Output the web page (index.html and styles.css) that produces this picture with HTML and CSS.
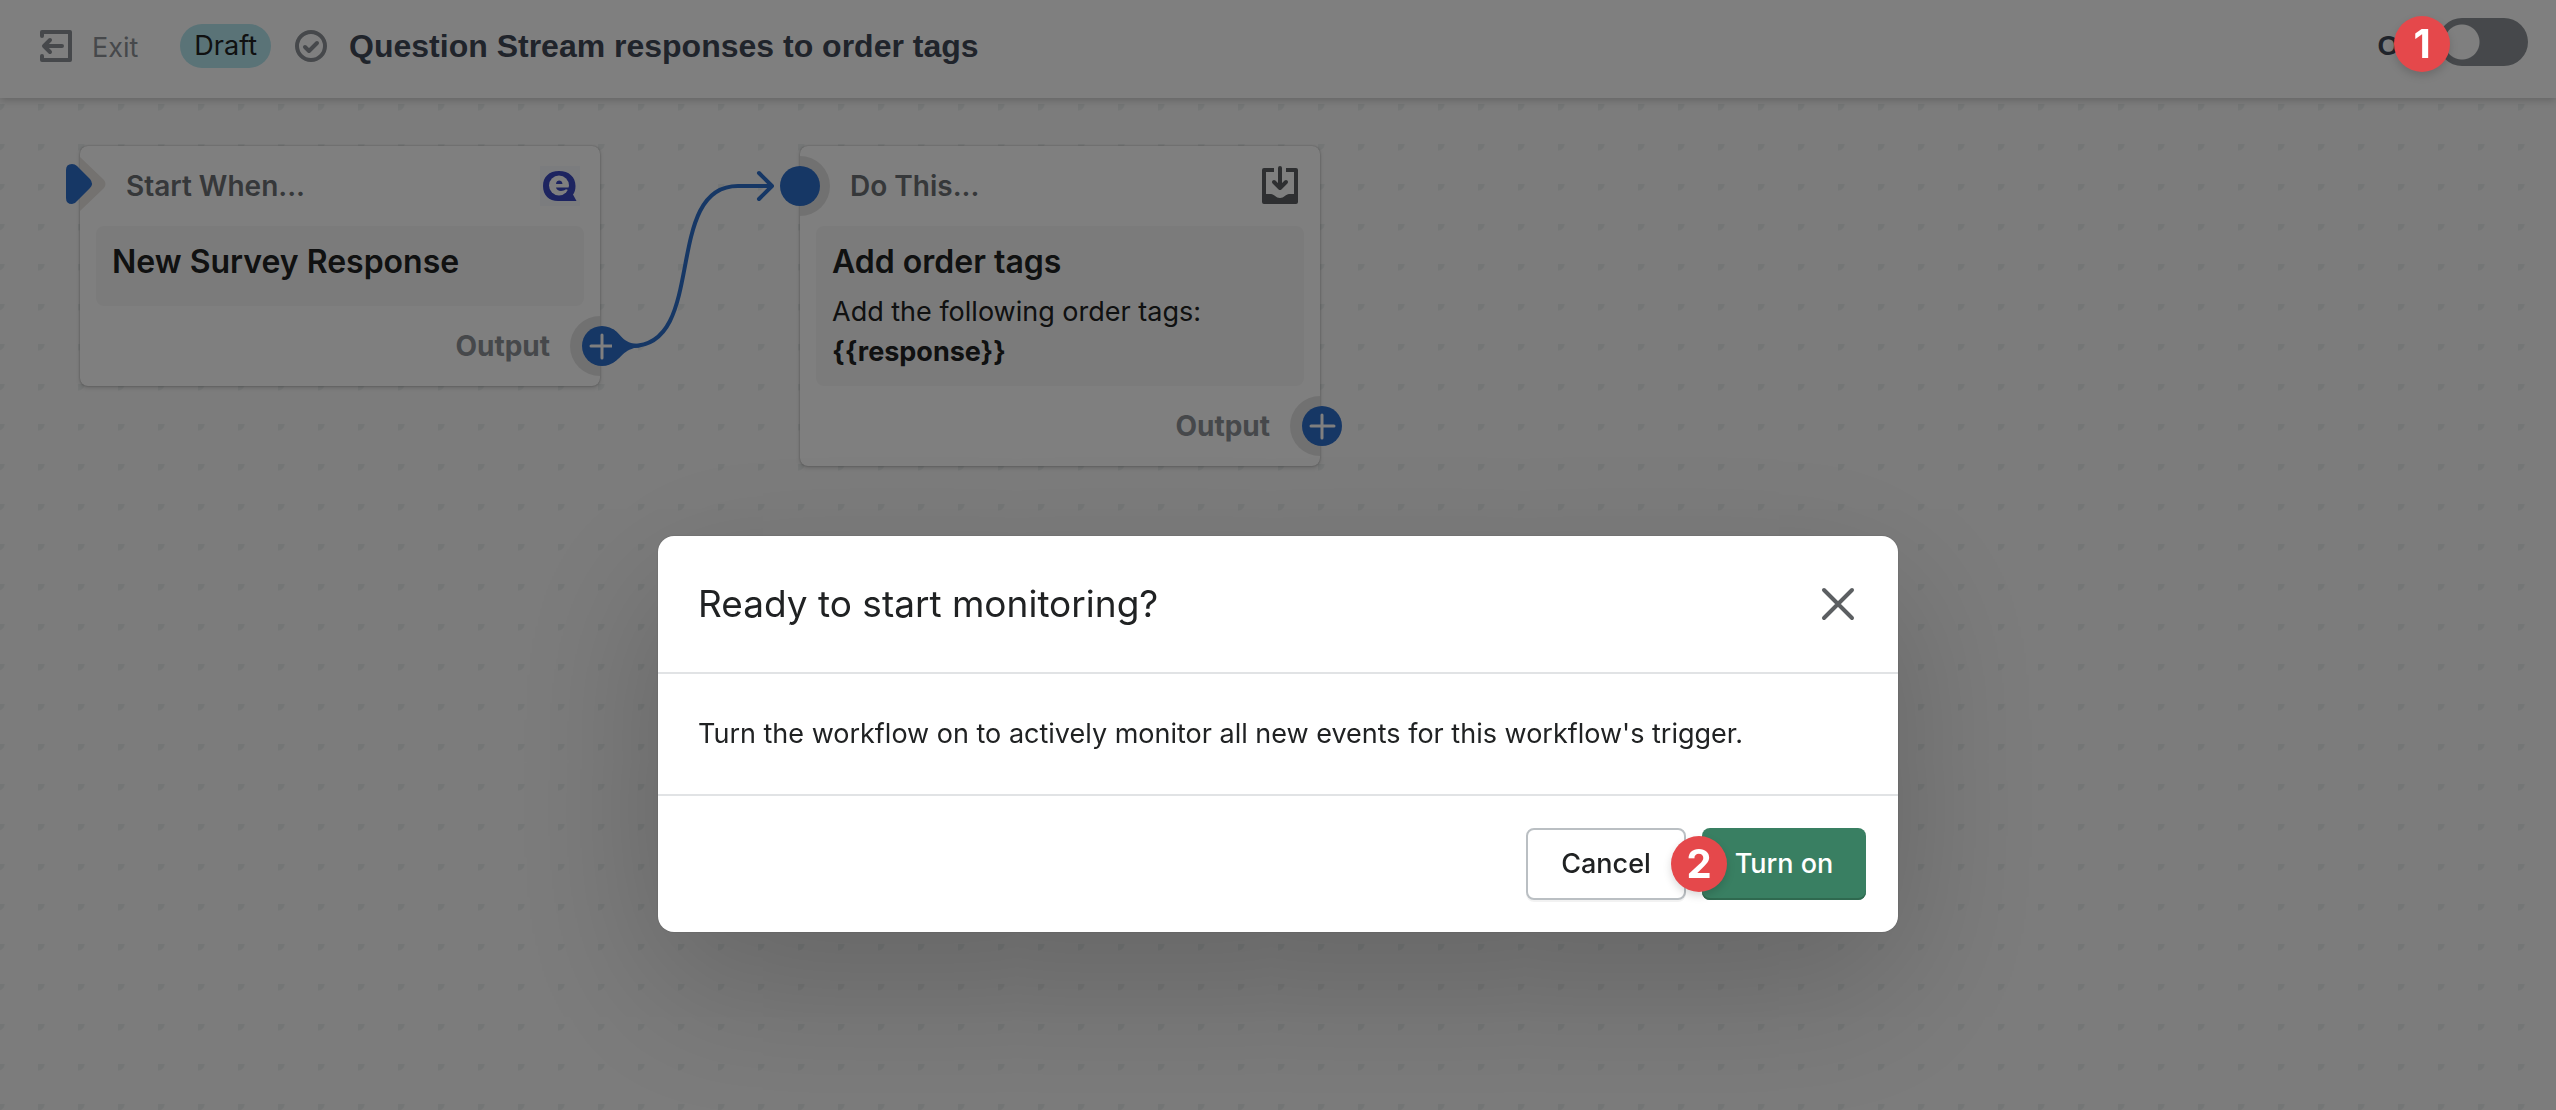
FILE: index.html
```html
<!DOCTYPE html>
<html lang="en">
<head>
<meta charset="utf-8">
<meta name="viewport" content="width=device-width, initial-scale=1">
<title>Question Stream responses to order tags</title>
<link rel="stylesheet" href="styles.css">
</head>
<body>
<div class="app">
  <header class="topbar">
    <a class="exit" href="#">
      <svg class="icon" viewBox="0 0 32 32" fill="none" stroke="currentColor" stroke-width="4" stroke-linecap="round" stroke-linejoin="round" aria-hidden="true">
        <path d="M2 6V2h28v28H2v-4"/>
        <path d="M22 16H5M10 10l-6 6 6 6"/>
      </svg>
      <span class="exit-text">Exit</span>
    </a>
    <span class="status">Draft</span>
    <svg class="icon check" viewBox="0 0 32 32" fill="none" stroke="currentColor" stroke-width="4" stroke-linecap="round" stroke-linejoin="round" aria-hidden="true">
      <circle cx="16" cy="16" r="14"/>
      <path d="M10 17l4 4 8-8"/>
    </svg>
    <h1 class="title">Question Stream responses to order tags</h1>
    <label class="power">
      <span>Off</span>
      <input class="toggle" type="checkbox" role="switch">
    </label>
  </header>

  <main class="canvas">
    <svg class="link" width="180" height="220" viewBox="600 156 180 220" fill="none" stroke="currentColor" stroke-width="4" stroke-linecap="round" stroke-linejoin="round" aria-hidden="true">
      <path d="M632 346C708 346 662 186 738 186H771M759 173l13 13-13 13"/>
      <path fill="currentColor" stroke="none" d="M612 329C622 333 621 344 640 344L640 347C622 349 622 359 612 363Z"/>
    </svg>

    <section class="node node-start">
      <div class="node-head">
        <h2 class="node-kind">Start When...</h2>
        <svg class="node-icon" viewBox="0 0 40 40" aria-hidden="true">
          <path fill="#f6f9fd" d="M0 0h40v40H0z"/>
          <path fill="#3a49c0" d="M19 5c10 0 16.500 6 16.500 15 0 4-1 6.500-2.500 8.500L36.500 35H18C9 35 3 29 3 20S9 5 19 5z"/>
          <circle cx="19" cy="19.500" r="10" fill="#fff"/>
          <path fill="#3a49c0" d="M16 18c.3-2.600 1.600-3.500 3.200-3.500s3 .9 3.300 3.500zM16 21.500h13.500v3l-3.500-1.200c-1.500 1.200-3 1.700-5 1.700-2.600 0-4.500-1.200-5-3.500z"/>
        </svg>
      </div>
      <div class="node-body">
        <h3 class="node-title">New Survey Response</h3>
      </div>
      <div class="node-foot">Output</div>
      <svg class="start-port" width="44" height="60" viewBox="66 154 44 60" aria-hidden="true">
        <path fill="#e8e4e0" d="M80 157l24 23q3 4 0 8L80 211z"/>
        <path fill="#2c6ecb" d="M66 170q0-6 6-6 3 0 5 2l13 13q4 5 0 9L77 201q-2 3-5 3-6 0-6-6z"/>
      </svg>
      <button class="port-out" type="button" aria-label="Add step">
        <svg viewBox="0 0 40 40" stroke="#fff" stroke-width="3" stroke-linecap="round" aria-hidden="true"><path d="M20 9v23M9 20h23"/></svg>
      </button>
    </section>

    <section class="node node-action">
      <div class="node-head">
        <h2 class="node-kind">Do This...</h2>
        <svg class="node-icon" viewBox="0 0 40 40" aria-hidden="true">
          <path fill="#5c5f62" d="M4 2h10v4H6v22h5c3 0 5 4 9 4s6-4 9-4h5V6h-8V2h10q2 0 2 2v32q0 2-2 2H4q-2 0-2-2V4q0-2 2-2z"/>
          <path fill="none" stroke="#5c5f62" stroke-width="4" stroke-linecap="round" stroke-linejoin="round" d="M20 2v19M14 16l6 6 6-6"/>
        </svg>
      </div>
      <div class="node-body">
        <h3 class="node-title">Add order tags</h3>
        <p class="node-text">Add the following order tags:<br><strong>{{response}}</strong></p>
      </div>
      <div class="node-foot">Output</div>
      <span class="port-in"></span>
      <button class="port-out" type="button" aria-label="Add step">
        <svg viewBox="0 0 40 40" stroke="#fff" stroke-width="3" stroke-linecap="round" aria-hidden="true"><path d="M20 9v23M9 20h23"/></svg>
      </button>
    </section>
  </main>
</div>

<div class="backdrop">
  <div class="modal" role="dialog" aria-modal="true" aria-labelledby="modal-title">
    <div class="modal-head">
      <h2 class="modal-title" id="modal-title">Ready to start monitoring?</h2>
      <button class="close" type="button" aria-label="Close">
        <svg viewBox="0 0 40 40" fill="none" stroke="currentColor" stroke-width="4" stroke-linecap="round" aria-hidden="true"><path d="M6 6l28 28M34 6L6 34"/></svg>
      </button>
    </div>
    <p class="modal-body">Turn the workflow on to actively monitor all new events for this workflow's trigger.</p>
    <div class="modal-foot">
      <button class="btn" type="button">Cancel</button>
      <div class="primary-wrap">
        <button class="btn btn-primary" type="button">Turn on</button>
        <span class="step step-two">2</span>
      </div>
    </div>
  </div>
</div>
<span class="step step-one">1</span>
</body>
</html>
```
FILE: styles.css
```css
* {
  box-sizing: border-box;
}

body {
  margin: 0;
  color: #202223;
  font: 400 27px/40px Inter, "Liberation Sans", sans-serif;
}

h1, h2, h3, p {
  margin: 0;
}

button {
  padding: 0;
  border: 0;
  background: none;
  color: inherit;
  font: inherit;
}

svg {
  display: block;
}

.app {
  display: flex;
  flex-direction: column;
  height: 100vh;
  overflow: hidden;
}

/* Top bar */
.topbar {
  position: relative;
  z-index: 1;
  display: flex;
  align-items: center;
  padding: 24px 28px 30px 40px;
  background: #fff;
  box-shadow: 0 2px 8px rgba(0, 0, 0, 0.2);
}

.exit {
  display: flex;
  align-items: center;
  gap: 20px;
  color: #8c9196;
  text-decoration: none;
}

.exit-text {
  padding-top: 4px;
}

.icon {
  width: 32px;
  height: 32px;
  color: #8c9196;
}

.status {
  margin-left: 42px;
  padding: 2px 14px;
  border-radius: 22px;
  background: #b5e6ef;
}

.check {
  margin-left: 24px;
}

.title {
  margin-left: 22px;
  color: #414857;
  font: 700 32px/40px "Liberation Sans", Arial, sans-serif;
}

.power {
  display: flex;
  align-items: center;
  gap: 20px;
  height: 44px;
  margin-left: auto;
  color: #414857;
  font: 700 28px/40px "Liberation Sans", Arial, sans-serif;
}

.toggle {
  width: 90px;
  height: 48px;
  margin: -8px 0 0;
  border: 0;
  border-radius: 24px;
  background: radial-gradient(circle at 24px 24px, #fff 17px, #8c9196 18px);
  appearance: none;
}

/* Workflow canvas */
.canvas {
  position: relative;
  flex: 1;
  background: #f8f8f8 radial-gradient(circle at 0 0, #e8ecec 6px, transparent 7px) 38px 6px / 40px 40px;
}

.link {
  position: absolute;
  top: 58px;
  left: 600px;
  z-index: 2;
  color: #2c6ecb;
}

.node {
  position: absolute;
  top: 48px;
  width: 520px;
  padding: 0 16px;
  border-radius: 8px;
  background: #fff;
  box-shadow: 0 0 2px rgba(0, 0, 0, 0.3), 0 2px 4px rgba(0, 0, 0, 0.15);
}

.node-start {
  left: 80px;
}

.node-action {
  left: 800px;
}

/* Half ring behind the output port */
.node::after {
  content: "";
  position: absolute;
  right: 0;
  bottom: 10px;
  width: 30px;
  height: 60px;
  border-radius: 30px 0 0 30px;
  background: #e3e3e3;
}

.node-head {
  display: flex;
  align-items: center;
  justify-content: space-between;
  height: 80px;
  padding: 0 4px 0 30px;
}

.node-action .node-head {
  padding-left: 34px;
}

.node-kind {
  color: #6d7175;
  font-size: 28px;
  font-weight: 600;
  line-height: 40px;
}

.node-icon {
  width: 40px;
  height: 40px;
}

.node-body {
  padding: 16px 16px 14px;
  border-radius: 8px;
  background: #f7f7f7;
}

.node-title {
  margin-bottom: 10px;
  font-size: 32px;
  font-weight: 600;
  line-height: 40px;
}

.node-foot {
  padding: 20px 34px;
  color: #8c9196;
  font-size: 28px;
  font-weight: 700;
  text-align: right;
}

.start-port {
  position: absolute;
  top: 8px;
  left: -14px;
}

.port-in {
  position: absolute;
  top: 20px;
  left: -20px;
  width: 40px;
  height: 40px;
  border-radius: 50%;
  background: #2c6ecb;
}

.node-action::before {
  content: "";
  position: absolute;
  top: 10px;
  left: 0;
  width: 30px;
  height: 60px;
  border-radius: 0 30px 30px 0;
  background: #e3e3e3;
}

.port-out {
  position: absolute;
  right: -22px;
  bottom: 20px;
  z-index: 1;
  width: 40px;
  height: 40px;
  border-radius: 50%;
  background: #2c6ecb;
}

/* Confirmation dialog */
.backdrop {
  position: fixed;
  inset: 0;
  z-index: 10;
  display: flex;
  align-items: flex-start;
  justify-content: center;
  padding: 536px 32px 0;
  overflow: hidden;
  background: rgba(0, 0, 0, 0.5);
}

.modal {
  width: 100%;
  max-width: 1240px;
  border-radius: 16px;
  background: #fff;
  box-shadow: 0 52px 160px rgba(0, 0, 0, 0.2), 0 0 2px rgba(0, 0, 0, 0.2);
}

.modal-head {
  display: flex;
  align-items: center;
  justify-content: space-between;
  padding: 40px;
  border-bottom: 2px solid #e1e3e5;
}

.modal-title {
  font-size: 37px;
  font-weight: 400;
  line-height: 56px;
}

.close {
  width: 40px;
  height: 40px;
  color: #5c5f62;
}

.modal-body {
  padding: 40px;
}

.modal-foot {
  display: flex;
  justify-content: flex-end;
  gap: 16px;
  padding: 32px;
  border-top: 2px solid #e1e3e5;
}

.btn {
  width: 160px;
  height: 72px;
  border: 2px solid #babfc3;
  border-radius: 8px;
  background: #fff;
  box-shadow: 0 2px 0 rgba(0, 0, 0, 0.05);
  font-weight: 500;
}

.primary-wrap {
  position: relative;
}

.btn-primary {
  width: 164px;
  border: 0;
  background: #397f62;
  box-shadow: inset 0 -2px 0 #2f694f;
  color: #fff;
}

/* Numbered step markers */
.step {
  position: absolute;
  z-index: 20;
  width: 56px;
  height: 56px;
  border-radius: 50%;
  background: #e5484b;
  box-shadow: 0 4px 8px rgba(0, 0, 0, 0.15);
  color: #fff;
  font-size: 40px;
  font-weight: 700;
  line-height: 56px;
  text-align: center;
}

.step-one {
  top: 16px;
  right: 106px;
}

.step-two {
  top: 8px;
  left: -31px;
}
```
